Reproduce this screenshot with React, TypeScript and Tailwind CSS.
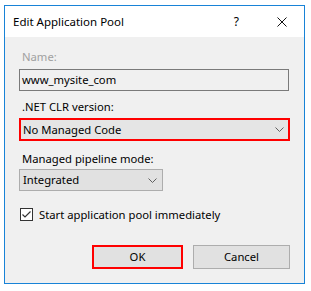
import React from "react";

function Chevron() {
  return (
    <svg width="9" height="5" viewBox="0 0 9 5" className="block">
      <polyline points="0.5,0.5 4.5,4.5 8.5,0.5" fill="none" stroke="#606060" strokeWidth="1" />
    </svg>
  );
}

export default function App() {
  return (
    <div
      className="w-[311px] h-[291px] bg-white pt-[5px] pl-[4px] text-[11.25px] text-black leading-[16px]"
      style={{ fontFamily: '"Noto Sans", "Liberation Sans", sans-serif' }}
    >
      <div className="w-[301px] h-[279px] border border-[#1883d7] flex flex-col">
        <div className="h-[31px] bg-white flex items-center pl-[8px] shrink-0">
          <span className="text-[11.5px]">Edit Application Pool</span>
          <div className="ml-auto flex items-center">
            <span className="text-[12px] mr-[38px]">?</span>
            <svg width="10" height="10" viewBox="0 0 10 10" className="block mr-[17px]">
              <line x1="0.5" y1="0.5" x2="9.5" y2="9.5" stroke="#111" strokeWidth="1" />
              <line x1="9.5" y1="0.5" x2="0.5" y2="9.5" stroke="#111" strokeWidth="1" />
            </svg>
          </div>
        </div>
        <div className="flex-1 bg-[#f0f0f0] pl-[14px] pt-[12px] flex flex-col">
          <div className="ml-[3px] h-[16px] text-[#a0a0a0]">Name:</div>
          <div className="mt-[4px] w-[270px] h-[22px] border border-[#7a7a7a] bg-[#f0f0f0] flex items-center pl-[2px]">
            www_mysite_com
          </div>
          <div className="mt-[8px] ml-[3px] h-[16px]">.NET CLR version:</div>
          <div className="mt-[3px] w-[271px] h-[23px] border-2 border-[#ff0000] bg-[#e5e5e5] flex items-center pl-[2px] pr-[4px]">
            <span>No Managed Code</span>
            <span className="ml-auto">
              <Chevron />
            </span>
          </div>
          <div className="mt-[10px] ml-[3px] h-[16px]">Managed pipeline mode:</div>
          <div className="mt-[2px] w-[144px] h-[22px] border border-[#adadad] bg-[#e1e1e1] flex items-center pl-[3px] pr-[5px]">
            <span>Integrated</span>
            <span className="ml-auto">
              <Chevron />
            </span>
          </div>
          <div className="mt-[17px] flex items-center h-[13px]">
            <svg width="13" height="13" viewBox="0 0 13 13" className="block ml-[1px]">
              <rect x="0.5" y="0.5" width="12" height="12" fill="#ffffff" stroke="#333333" strokeWidth="1" />
              <polyline points="2.5,6.5 5,9 10.5,3.5" fill="none" stroke="#333333" strokeWidth="1.2" />
            </svg>
            <span className="ml-[6px]">Start application pool immediately</span>
          </div>
          <div className="mt-[24px] flex">
            <div className="ml-[73px] w-[91px] h-[24px] border-2 border-[#ff0000] bg-[#e1e1e1] flex items-center justify-center">
              OK
            </div>
            <div className="ml-[10px] w-[97px] h-[24px] border border-[#adadad] bg-[#e1e1e1] flex items-center justify-center">
              Cancel
            </div>
          </div>
        </div>
      </div>
    </div>
  );
}
